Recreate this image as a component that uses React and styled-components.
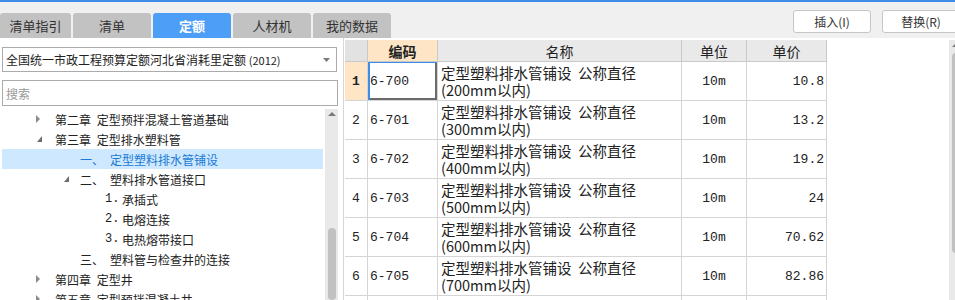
import React from "react";
import styled, { createGlobalStyle } from "styled-components";

const GlobalStyle = createGlobalStyle`
  html, body {
    margin: 0;
    padding: 0;
    background: #fff;
    overflow: hidden;
  }
  body {
    font-family: "Noto Sans CJK SC", "Noto Sans", sans-serif;
    color: #222;
  }
`;

const Frame = styled.div`
  width: 962px;
  height: 300px;
  overflow: hidden;
  display: flex;
  flex-direction: column;
`;

const TopLine = styled.div`
  height: 2px;
  background: #3e8ee8;
`;

const Toolbar = styled.div`
  height: 36px;
  background: #f0f0f0;
  display: flex;
  align-items: flex-start;
  flex-shrink: 0;
`;

const Tabs = styled.div`
  display: flex;
  gap: 2px;
  margin-top: 11px;
`;

const Tab = styled.div`
  width: ${(p) => p.$w}px;
  height: 25px;
  border-radius: 3px 3px 0 0;
  background: ${(p) => (p.$active ? "#4d9ef7" : "#c2c2c2")};
  color: ${(p) => (p.$active ? "#fff" : "#333")};
  font-weight: ${(p) => (p.$active ? 700 : 400)};
  font-size: 13px;
  display: flex;
  align-items: center;
  justify-content: center;
`;

const Actions = styled.div`
  display: flex;
  gap: 11px;
  margin-left: 402px;
  margin-top: 8px;
`;

const ActionButton = styled.div`
  width: 78px;
  height: 23px;
  box-sizing: border-box;
  background: #fff;
  border: 1px solid #c6c6c6;
  border-radius: 3px;
  font-size: 12px;
  color: #333;
  display: flex;
  align-items: center;
  justify-content: center;
`;

const Main = styled.div`
  display: flex;
  flex: 1;
  min-height: 0;
`;

const LeftPanel = styled.div`
  width: 344px;
  box-sizing: border-box;
  border-right: 1px solid #d6d6d6;
  padding: 9px 0 0 2px;
  display: flex;
  flex-direction: column;
`;

const Select = styled.div`
  width: 335px;
  height: 25px;
  box-sizing: border-box;
  border: 1px solid #ababab;
  padding: 0 6px 0 3px;
  font-size: 12px;
  display: flex;
  align-items: center;
  justify-content: space-between;
  white-space: nowrap;
`;

const Year = styled.span`
  font-size: 11px;
`;

const Search = styled.div`
  width: 336px;
  height: 26px;
  margin-top: 8px;
  box-sizing: border-box;
  border: 1px solid #ababab;
  padding-left: 3px;
  font-size: 12px;
  color: #999;
  display: flex;
  align-items: center;
`;

const TreeArea = styled.div`
  margin-top: 3px;
  display: flex;
  gap: 2px;
  flex: 1;
  min-height: 0;
`;

const TreeList = styled.div`
  width: 321px;
`;

const TreeRow = styled.div`
  height: 20px;
  display: flex;
  align-items: center;
  padding-left: ${(p) => p.$indent}px;
  background: ${(p) => (p.$selected ? "#cde8ff" : "transparent")};
  color: ${(p) => (p.$selected ? "#1a7ad4" : "#222")};
  font-size: 12px;
  white-space: nowrap;
  word-spacing: 3px;
`;

const Toggle = styled.span`
  width: ${(p) => p.$w}px;
  flex-shrink: 0;
  display: flex;
  align-items: center;
`;

const Label = styled.span`
  width: ${(p) => p.$w}px;
  flex-shrink: 0;
  font-family: ${(p) => (p.$mono ? '"Liberation Mono", monospace' : "inherit")};
`;

const ScrollTrack = styled.div`
  width: 13px;
  flex-shrink: 0;
  background: #e9e9e9;
  display: flex;
  flex-direction: column;
  align-items: center;
`;

const ScrollArrow = styled.div`
  margin-top: ${(p) => p.$top}px;
  width: 0;
  height: 0;
  border-left: 4px solid transparent;
  border-right: 4px solid transparent;
  border-bottom: 4px solid #7a7a7a;
`;

const ScrollThumb = styled.div`
  margin-top: ${(p) => p.$top}px;
  width: 8px;
  height: 200px;
  border-radius: 4px;
  background: #c1c1c1;
`;

const RightPanel = styled.div`
  flex: 1;
  display: flex;
  margin-left: 1px;
  padding-top: 2px;
`;

const Grid = styled.div`
  display: grid;
  grid-template-columns: 23px 70px 244px 65px 80px;
  grid-auto-rows: 39px;
  grid-template-rows: 22px;
  align-self: flex-start;
`;

const HeadCell = styled.div`
  box-sizing: border-box;
  border-right: 1px solid #c9c9c9;
  border-bottom: 1px solid #c9c9c9;
  background: ${(p) => (p.$active ? "#fde5c6" : p.$corner ? "#e2e2e2" : "#e9e9e9")};
  font-weight: ${(p) => (p.$active ? 700 : 400)};
  font-size: 14px;
  display: flex;
  align-items: center;
  justify-content: center;
`;

const Cell = styled.div`
  box-sizing: border-box;
  border-right: 1px solid #d5d5d5;
  border-bottom: 1px solid #d5d5d5;
  display: flex;
  align-items: center;
  justify-content: ${(p) => p.$align || "flex-start"};
  padding: ${(p) => p.$pad || "0"};
  font-family: ${(p) => (p.$mono ? '"Liberation Mono", "Noto Sans CJK SC", monospace' : '"Noto Sans CJK SC", sans-serif')};
  font-size: ${(p) => (p.$mono ? "13px" : "14.5px")};
  background: ${(p) => (p.$peach ? "#fde5c6" : "#fff")};
  font-weight: ${(p) => (p.$bold ? 700 : 400)};
  box-shadow: ${(p) =>
    p.$focus ? "inset 2px 1px 0 #3b8de6, inset -2px -2px 0 #6a6a6a" : "none"};
  white-space: nowrap;
  overflow: hidden;
`;

const NameText = styled.div`
  line-height: 17px;
`;

const Filler = styled.div`
  flex: 1;
`;

const tabs = [
  { name: "清单指引", w: 71 },
  { name: "清单", w: 78 },
  { name: "定额", w: 78, active: true },
  { name: "人材机", w: 78 },
  { name: "我的数据", w: 78 },
];

const tree = [
  { indent: 34, toggle: "closed", tw: 19, text: "第二章 定型预拌混凝土管道基础" },
  { indent: 34, toggle: "open", tw: 19, text: "第三章 定型排水塑料管" },
  { indent: 61, tw: 17, label: "一、", lw: 30, text: "定型塑料排水管铺设", selected: true },
  { indent: 61, toggle: "open", tw: 17, label: "二、", lw: 30, text: "塑料排水管道接口" },
  { indent: 86, tw: 17, label: "1.", lw: 17, mono: true, text: "承插式" },
  { indent: 86, tw: 17, label: "2.", lw: 17, mono: true, text: "电熔连接" },
  { indent: 86, tw: 17, label: "3.", lw: 17, mono: true, text: "电热熔带接口" },
  { indent: 61, tw: 17, label: "三、", lw: 30, text: "塑料管与检查井的连接" },
  { indent: 34, toggle: "closed", tw: 19, text: "第四章 定型井" },
  { indent: 34, toggle: "closed", tw: 19, text: "第五章 定型预拌混凝土井" },
];

const rows = [
  { code: "6-700", size: "200", price: "10.8" },
  { code: "6-701", size: "300", price: "13.2" },
  { code: "6-702", size: "400", price: "19.2" },
  { code: "6-703", size: "500", price: "24" },
  { code: "6-704", size: "600", price: "70.62" },
  { code: "6-705", size: "700", price: "82.86" },
  { code: "6-706", size: "800", price: "95.1" },
];

function ToggleIcon({ kind }) {
  if (kind === "closed") {
    return (
      <svg width="5" height="8" viewBox="0 0 5 8">
        <polygon points="0,0 4,4 0,8" fill="#8c8c8c" />
      </svg>
    );
  }
  if (kind === "open") {
    return (
      <svg width="6" height="6" viewBox="0 0 6 6" style={{ marginLeft: 1 }}>
        <polygon points="5,0 5,6 0,6" fill="#6e6e6e" />
      </svg>
    );
  }
  return null;
}

export default function App() {
  return (
    <Frame>
      <GlobalStyle />
      <TopLine />
      <Toolbar>
        <Tabs>
          {tabs.map((t) => (
            <Tab key={t.name} $w={t.w} $active={t.active}>
              {t.name}
            </Tab>
          ))}
        </Tabs>
        <Actions>
          <ActionButton>插入(I)</ActionButton>
          <ActionButton>替换(R)</ActionButton>
        </Actions>
      </Toolbar>
      <Main>
        <LeftPanel>
          <Select>
            <span>
              全国统一市政工程预算定额河北省消耗里定额 <Year>(2012)</Year>
            </span>
            <svg width="7" height="4" viewBox="0 0 7 4">
              <polygon points="0,0 7,0 3.5,4" fill="#7a7a7a" />
            </svg>
          </Select>
          <Search>搜索</Search>
          <TreeArea>
            <TreeList>
              {tree.map((n, i) => (
                <TreeRow key={i} $indent={n.indent} $selected={n.selected}>
                  <Toggle $w={n.tw}>
                    <ToggleIcon kind={n.toggle} />
                  </Toggle>
                  {n.label && (
                    <Label $w={n.lw} $mono={n.mono}>
                      {n.label}
                    </Label>
                  )}
                  <span>{n.text}</span>
                </TreeRow>
              ))}
            </TreeList>
            <ScrollTrack>
              <ScrollArrow $top={3} />
              <ScrollThumb $top={112} />
            </ScrollTrack>
          </TreeArea>
        </LeftPanel>
        <RightPanel>
          <Grid>
            <HeadCell $corner />
            <HeadCell $active>编码</HeadCell>
            <HeadCell>名称</HeadCell>
            <HeadCell>单位</HeadCell>
            <HeadCell>单价</HeadCell>
            {rows.map((r, i) => (
              <React.Fragment key={r.code}>
                <Cell $mono $align="center" $peach={i === 0} $bold={i === 0}>
                  {i + 1}
                </Cell>
                <Cell $mono $pad="0 0 0 2px" $focus={i === 0}>
                  {r.code}
                </Cell>
                <Cell $pad="0 0 0 3px">
                  <NameText>
                    <div>定型塑料排水管铺设&nbsp; 公称直径</div>
                    <div>({r.size}mm以内)</div>
                  </NameText>
                </Cell>
                <Cell $mono $align="center">
                  10m
                </Cell>
                <Cell $mono $align="flex-end" $pad="0 2px 0 0">
                  {r.price}
                </Cell>
              </React.Fragment>
            ))}
          </Grid>
          <Filler />
          <ScrollTrack>
            <ScrollArrow $top={3} />
            <ScrollThumb $top={6} />
          </ScrollTrack>
        </RightPanel>
      </Main>
    </Frame>
  );
}
